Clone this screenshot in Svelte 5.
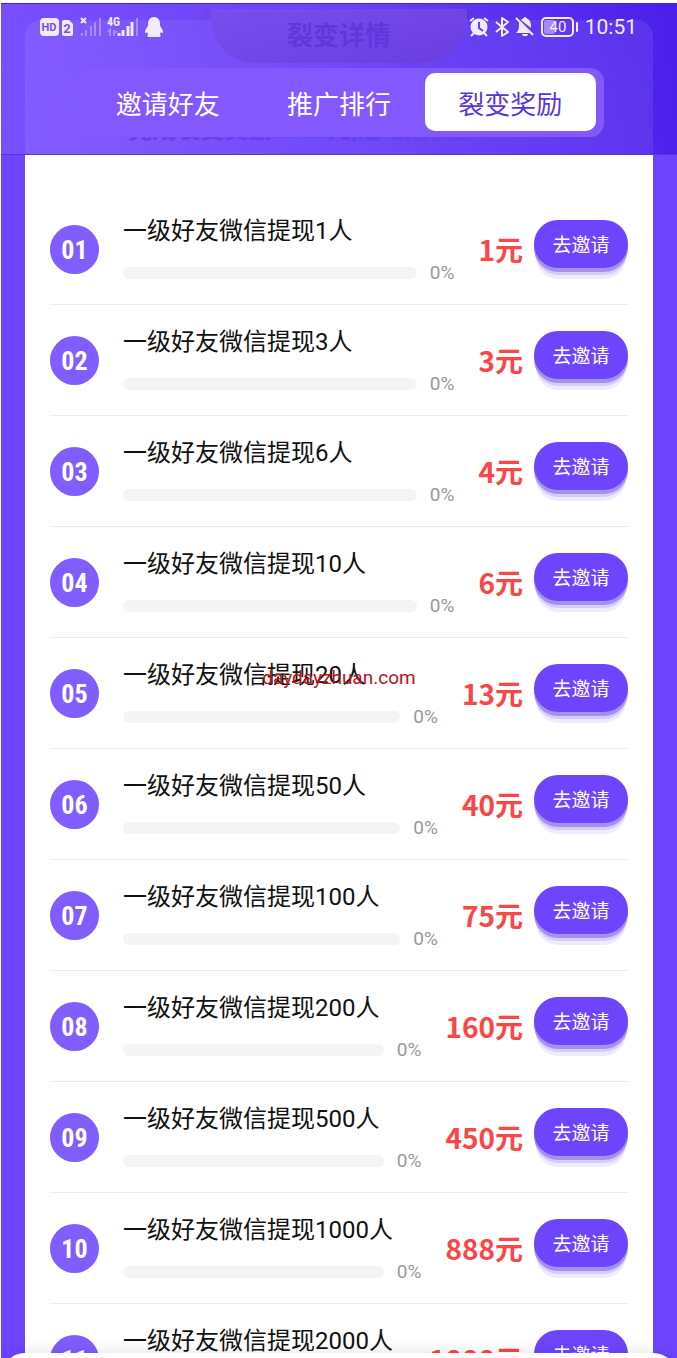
<script lang="ts">
    interface Reward {
        people: number;
        amount: number;
    }

    const tabs = ['邀请好友', '推广排行', '裂变奖励'];
    const rewards: Reward[] = [
        { people: 1, amount: 1 },
        { people: 3, amount: 3 },
        { people: 6, amount: 4 },
        { people: 10, amount: 6 },
        { people: 20, amount: 13 },
        { people: 50, amount: 40 },
        { people: 100, amount: 75 },
        { people: 200, amount: 160 },
        { people: 500, amount: 450 },
        { people: 1000, amount: 888 },
        { people: 2000, amount: 1888 },
    ];

    let active = $state(2);
</script>

<div class="screen">
    <header class="header">
        <div class="ghost-sheet"></div>
        <div class="ghost-ears"></div>
        <div class="ghost-title">裂变详情</div>
        <div class="ghost-note">完成裂变奖励1000元,活动期满立得奖励</div>

        <div class="status">
            <div class="status-side">
                <svg width="34" height="20" viewBox="0 0 34 20">
                    <rect x="0" y="1" width="19" height="18" rx="4" fill="#f1ebff"/>
                    <path d="M24 3h5l4 4v10a2 2 0 0 1-2 2h-7a2 2 0 0 1-2-2V5a2 2 0 0 1 2-2z" fill="#f1ebff"/>
                    <text x="9" y="14" text-anchor="middle" class="hd">HD</text>
                    <text x="27" y="16" text-anchor="middle" class="sim">2</text>
                </svg>
                <svg width="21" height="20" viewBox="0 0 21 20">
                    <path d="M1 1l5 5M6 1l-5 5" stroke="#f1ebff" stroke-width="2"/>
                    <path d="M2 16v3M6 13v6M11 9v10M15 5v14M20 1v18" stroke="#a98cff" stroke-width="2"/>
                </svg>
                <svg width="32" height="20" viewBox="0 0 32 20">
                    <path d="M3 19v-6l-2 2M7 13v6M7 16l3-2" stroke="#a98cff" stroke-width="2" fill="none"/>
                    <path d="M12 16v3M16 13v6M21 9v10M25 5v14" stroke="#f1ebff" stroke-width="3"/>
                    <path d="M30 1v18" stroke="#a98cff" stroke-width="2"/>
                    <text x="0" y="9" class="net">4G</text>
                </svg>
                <svg width="18" height="20" viewBox="0 0 18 20">
                    <path d="M9 0C5 0 3 3 3 7v2c-1 1-3 4-3 6 0 2 1 1 2 0l1 2c-1 1-1 3 1 3h10c2 0 2-2 1-3l1-2c1 1 2 2 2 0 0-2-2-5-3-6V7c0-4-2-7-6-7z" fill="#f1ebff"/>
                </svg>
            </div>
            <div class="status-side right">
                <svg width="20" height="20" viewBox="0 0 20 20">
                    <circle cx="10" cy="10" r="8.5" fill="#f1ebff"/>
                    <path d="M1 4l4-3M19 4l-4-3M2 19l3-3M18 19l-3-3" stroke="#f1ebff" stroke-width="2"/>
                    <path d="M10 5v6l4 3" stroke="#6a3df2" stroke-width="2" fill="none"/>
                </svg>
                <svg width="14" height="20" viewBox="0 0 14 20">
                    <path d="M1 5l12 10-6 4V1l6 4L1 15" stroke="#f1ebff" stroke-width="2" fill="none" stroke-linejoin="round"/>
                </svg>
                <svg width="20" height="20" viewBox="0 0 20 20">
                    <path d="M7 2c1 0 2-2 3-2s2 2 3 2c3 2 3 5 3 9L6 3zM4 5l11 11H1c2-2 3-4 3-7zM7 17h6c0 3-6 3-6 0z" fill="#f1ebff"/>
                    <path d="M1 1l17 17" stroke="#f1ebff" stroke-width="2"/>
                </svg>
                <svg width="38" height="20" viewBox="0 0 38 20">
                    <rect x="1" y="1" width="31" height="18" rx="4" stroke="#f1ebff" stroke-width="2" fill="none"/>
                    <rect x="3" y="3" width="11" height="14" rx="2" fill="#a58bf8"/>
                    <text x="17" y="15" text-anchor="middle" class="level">40</text>
                    <path d="M36 6v8" stroke="#f1ebff" stroke-width="2" stroke-linecap="round"/>
                </svg>
                <span class="clock">10:51</span>
            </div>
        </div>

        <nav class="tabs">
            {#each tabs as tab, i}
                <button class="tab" class:active={active === i} onclick={() => (active = i)}>{tab}</button>
            {/each}
        </nav>
    </header>

    <main class="sheet">
        {#each rewards as reward, i}
            <div class="row">
                <span class="index">{String(i + 1).padStart(2, '0')}</span>
                <div class="info">
                    <div class="title">一级好友微信提现{reward.people}人</div>
                    <div class="progress">
                        <div class="track"></div>
                        <span class="percent">0%</span>
                    </div>
                </div>
                <strong class="amount">{reward.amount}元</strong>
                <button class="invite">去邀请</button>
            </div>
        {/each}
    </main>

    <div class="watermark">daydayzhuan.com</div>
    <div class="bottom-sheet"></div>
</div>

<style>
    :global(body) {
        background: #fff;
    }

    .screen {
        position: relative;
        box-sizing: border-box;
        height: 100vh;
        overflow: hidden;
        border-top: 3px solid #fff;
        border-left: 1px solid #fff;
        background: #6e44ff;
        font-family: Roboto, "Noto Sans CJK SC", sans-serif;
    }

    button {
        border: none;
        padding: 0;
        font-family: inherit;
        cursor: pointer;
    }

    .header {
        position: relative;
        box-sizing: border-box;
        height: 152px;
        padding-top: 12px;
        border-top: 1px solid #4a20d8;
        border-bottom: 1px solid #5a30d8;
        background: linear-gradient(80deg, #7a4fff, #6b42f8 50%, #4a1fea);
        overflow: hidden;
    }

    /* page content showing through the header */
    .ghost-sheet {
        position: absolute;
        top: 16px;
        bottom: 0;
        left: 24px;
        right: 24px;
        border-radius: 16px 16px 0 0;
        background: linear-gradient(90deg, rgba(255, 255, 255, 0.08), rgba(255, 255, 255, 0.04) 50%, rgba(255, 255, 255, 0.08));
    }

    .ghost-ears {
        position: absolute;
        top: 5px;
        left: 50%;
        width: 276px;
        height: 11px;
        margin-left: -138px;
        border-radius: 10px 10px 0 0;
        background: linear-gradient(90deg, #7044ee, #5c32e2);
    }

    .ghost-title {
        position: absolute;
        top: 5px;
        left: 50%;
        width: 256px;
        height: 54px;
        margin-left: -128px;
        border-radius: 0 0 44px 44px;
        background: linear-gradient(165deg, #784eee, #6b3de0);
        color: #6036dc;
        font-size: 26px;
        font-weight: bold;
        line-height: 54px;
        text-align: center;
    }

    .ghost-note {
        position: absolute;
        bottom: 9px;
        left: 0;
        right: 0;
        color: #683fec;
        font-size: 24px;
        font-weight: bold;
        line-height: 30px;
        text-align: center;
        white-space: nowrap;
    }

    .status {
        position: relative;
        display: flex;
        justify-content: space-between;
        height: 22px;
        padding: 0 40px 0 39px;
    }

    .status-side {
        display: flex;
        align-items: center;
        gap: 6px;
    }

    .hd {
        fill: #7a50f0;
        font-size: 11px;
        font-weight: bold;
    }

    .sim {
        fill: #7a50f0;
        font-size: 13px;
        font-weight: bold;
    }

    .net {
        fill: #f1ebff;
        font-family: "Roboto Condensed", Roboto, sans-serif;
        font-size: 12px;
        font-weight: bold;
    }

    .level {
        fill: #f1ebff;
        font-size: 15px;
    }

    .clock {
        color: #f1ebff;
        font-size: 21px;
        line-height: 22px;
    }

    .tabs {
        position: relative;
        display: flex;
        box-sizing: border-box;
        height: 69px;
        margin: 30px 73px 0;
        padding: 5px 8px 6px;
        border-radius: 14px;
        background: #8458ff;
    }

    .tab {
        flex: 1;
        border-radius: 10px;
        background: none;
        color: #fff;
        font-size: 26px;
    }
        .tab.active {
            background: #fff;
            color: #5a33e0;
        }

    .sheet {
        margin: 0 24px;
        padding: 39px 25px 0;
        background: #fff;
    }

    .row {
        display: flex;
        align-items: center;
        box-sizing: border-box;
        height: 111px;
        border-bottom: 1px solid #ececec;
    }

    .index {
        width: 49px;
        height: 49px;
        border-radius: 50%;
        background: #815cff;
        color: #fff;
        font-family: "Roboto Condensed", "Liberation Sans Narrow", Roboto, sans-serif;
        font-size: 26px;
        font-weight: bold;
        line-height: 50px;
        text-align: center;
    }

    .info {
        flex: 1;
        margin: 0 24px;
    }

    .title {
        color: #111;
        font-size: 24px;
        line-height: 36px;
        white-space: nowrap;
    }

    .progress {
        display: flex;
        align-items: center;
        gap: 13px;
        margin-top: 11px;
    }

    .track {
        flex: 1;
        height: 12px;
        border-radius: 6px;
        background: #f4f4f4;
    }

    .percent {
        color: #999;
        font-size: 19px;
        line-height: 26px;
    }

    .amount {
        margin-right: 11px;
        color: #fa4646;
        font-family: "Noto Sans CJK SC", sans-serif;
        font-size: 28px;
        font-weight: bold;
    }

    .invite {
        width: 94px;
        height: 48px;
        margin-bottom: 11px;
        border-radius: 24px;
        background: #6e44ff;
        box-shadow: 0 4px 0 #a592e8, 0 8px 0 -1px #d6ccfa, 0 13px 0 -2px #efebfe;
        color: #fff;
        font-size: 19px;
    }

    .watermark {
        position: absolute;
        top: 663px;
        left: 0;
        right: 0;
        color: #b8141c;
        font-size: 19px;
        line-height: 24px;
        text-align: center;
        pointer-events: none;
    }

    .bottom-sheet {
        position: absolute;
        bottom: -51px;
        left: 0;
        right: 0;
        height: 56px;
        border-radius: 24px;
        background: #fff;
        box-shadow: 0 0 16px rgba(0, 0, 0, 0.12);
    }
</style>
